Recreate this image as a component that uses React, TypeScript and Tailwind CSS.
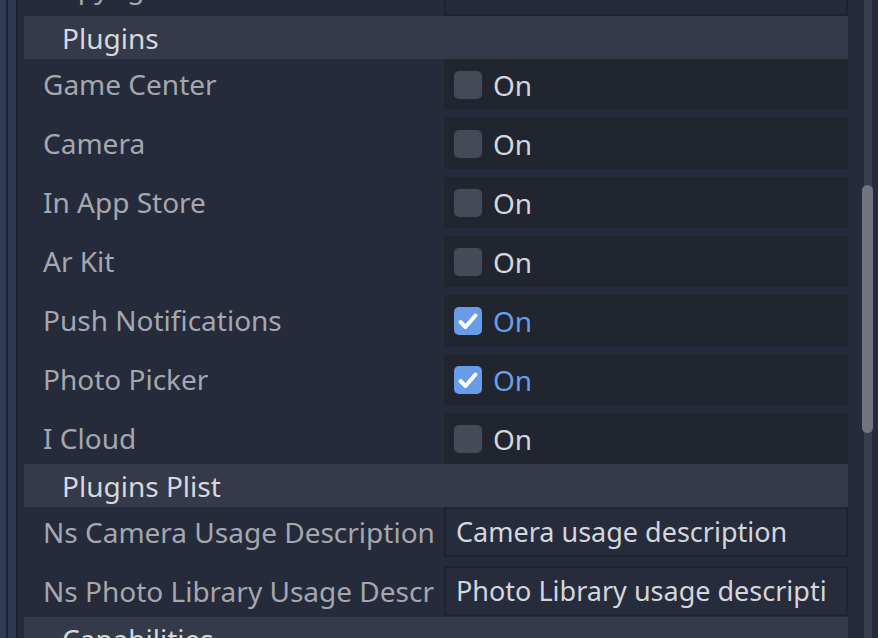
import React from 'react'

type CheckRow = { label: string; checked: boolean }

const checkRows: CheckRow[] = [
  { label: 'Game Center', checked: false },
  { label: 'Camera', checked: false },
  { label: 'In App Store', checked: false },
  { label: 'Ar Kit', checked: false },
  { label: 'Push Notifications', checked: true },
  { label: 'Photo Picker', checked: true },
  { label: 'I Cloud', checked: false },
]

const plistRows = [
  { label: 'Ns Camera Usage Description', value: 'Camera usage description' },
  { label: 'Ns Photo Library Usage Descr', value: 'Photo Library usage descripti' },
]

function Header({ title }: { title: string }) {
  return (
    <div className="h-[43px] shrink-0 flex items-center bg-[#343a49] pl-[38px] text-[#d6d8dd]">
      <span className="leading-none">{title}</span>
    </div>
  )
}

function CheckBox({ checked }: { checked: boolean }) {
  if (!checked) return <div className="w-[28px] h-[28px] rounded-[5px] bg-[#464a57]" />
  return (
    <div className="w-[28px] h-[28px] rounded-[5px] bg-[#699ce7] flex items-center justify-center">
      <svg width="28" height="28" viewBox="0 0 28 28">
        <polyline points="6.5,15 11.5,20 21.5,8.5" fill="none" stroke="#ffffff" strokeWidth="4" strokeLinecap="round" strokeLinejoin="round" />
      </svg>
    </div>
  )
}

export default function App() {
  return (
    <div className="w-[878px] h-[638px] overflow-hidden flex bg-[#262b3b] text-[28px] font-['Noto_Sans','Open_Sans',sans-serif]">
      {/* left dock edge */}
      <div className="w-[6px] bg-[#323c54]" />
      <div className="w-[2px] bg-[#1d2231]" />
      <div className="w-[8px] bg-[#2f3a52]" />
      <div className="w-[2px] bg-[#1c2130]" />

      <div className="w-[6px]" />
      <div className="w-[824px] flex flex-col -mt-[43px]">
        {/* copyright row, mostly scrolled out */}
        <div className="h-[59px] shrink-0 flex">
          <div className="w-[420px] flex items-center pl-[19px] text-[#a4a7ae]">Copyright</div>
          <div className="w-[404px] h-[51px] mt-[8px] border-2 border-[#1f2330] bg-[#262b3b]" />
        </div>

        <Header title="Plugins" />
        {checkRows.map((r, i) => (
          <div key={r.label} className={`shrink-0 flex ${i === checkRows.length - 1 ? 'h-[51px]' : 'h-[59px]'}`}>
            <div className="w-[420px] h-[50px] flex items-center pl-[19px] text-[#a4a7ae]">{r.label}</div>
            <div className="w-[404px] h-[51px] bg-[#21252f] flex items-center pl-[10px] gap-[11px]">
              <CheckBox checked={r.checked} />
              <span className={r.checked ? 'text-[#6a9ee7]' : 'text-[#d3d6dc]'}>On</span>
            </div>
          </div>
        ))}
        <Header title="Plugins Plist" />
        {plistRows.map((r, i) => (
          <div key={r.label} className={`shrink-0 flex ${i === 0 ? 'h-[59px]' : 'h-[51px]'}`}>
            <div className="w-[420px] h-[50px] flex items-center pl-[19px] text-[#a4a7ae] whitespace-nowrap overflow-hidden">{r.label}</div>
            <div className="w-[404px] h-[50px] border-2 border-[#1f2330] bg-[#272c3c] flex items-center pl-[10px] text-[27px] text-[#d3d6dc] whitespace-nowrap overflow-hidden">
              {r.value}
            </div>
          </div>
        ))}
        <Header title="Capabilities" />
      </div>

      {/* scrollbar */}
      <div className="w-[14px]" />
      <div className="w-[11px] flex justify-center relative">
        <div className="w-[8px] h-full bg-[#373c4e]" />
        <div className="absolute left-0 top-[185px] w-[11px] h-[248px] rounded-full bg-[#71747f]" />
      </div>
      <div className="flex-1" />
    </div>
  )
}
